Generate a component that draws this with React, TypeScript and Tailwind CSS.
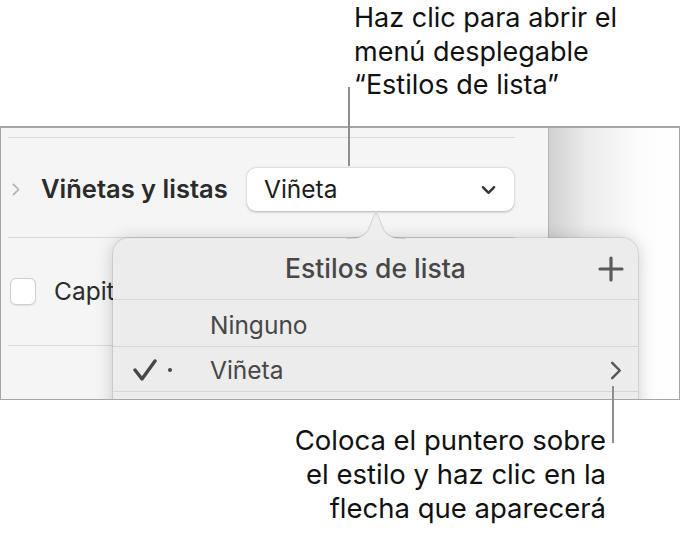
import React from "react";

function ChevronRight({ className }: { className?: string }) {
  return (
    <svg viewBox="0 0 12 20" className={className} fill="none">
      <polyline points="2,2 10,10 2,18" stroke="currentColor" strokeWidth="2.6" strokeLinecap="round" strokeLinejoin="round" />
    </svg>
  );
}

export default function App() {
  return (
    <div className="relative w-[681px] h-[535px] overflow-hidden bg-white font-['Inter',sans-serif] text-[#111]">
      {/* callout top */}
      <div className="h-[126px] pl-[354px] pt-[1px] text-[27px] leading-[33.5px]">
        <p>Haz clic para abrir el</p>
        <p>menú desplegable</p>
        <p>“Estilos de lista”</p>
      </div>

      {/* captured window */}
      <div className="relative flex h-[274px] w-[680px] overflow-hidden border border-t-2 border-[#a5a5a5]">
        <div className="w-[548px] shrink-0 border-r border-[#b5b5b5] bg-[#f5f5f5]">
          <div className="mt-[9px] ml-[7px] h-px w-[507px] bg-[#d9d9d9]" />

          <div className="mt-[30px] flex items-center pl-[11px]">
            <ChevronRight className="h-[13px] w-[8px] text-[#b3b3b3]" />
            <span className="ml-[21px] w-[206px] text-[25.5px] font-semibold text-[#2b2b2b]">Viñetas y listas</span>
            <div className="flex h-[43px] w-[267px] items-center justify-between rounded-[9px] bg-white pl-[17px] pr-[18px] shadow-[0_0.5px_2.5px_rgba(0,0,0,0.28)]">
              <span className="text-[24.5px] text-[#1c1c1c]">Viñeta</span>
              <svg viewBox="0 0 16 10" className="h-[10px] w-[15px]" fill="none">
                <polyline points="2,2 8,8 14,2" stroke="#333" strokeWidth="2.6" strokeLinecap="round" strokeLinejoin="round" />
              </svg>
            </div>
          </div>

          <div className="mt-[26px] ml-[7px] h-px w-[507px] bg-[#d9d9d9]" />

          <div className="mt-[40px] flex h-[27px] items-center pl-[9px]">
            <div className="h-[27px] w-[26px] rounded-[6px] border border-[#cfcfcf] bg-white shadow-[0_0.5px_1px_rgba(0,0,0,0.08)]" />
            <span className="ml-[18px] text-[24.5px] leading-none text-[#2b2b2b]">Capitalización</span>
          </div>

          <div className="mt-[40px] ml-[7px] h-px w-[507px] bg-[#d9d9d9]" />
        </div>

        <div className="flex-1 bg-[linear-gradient(to_right,#d0d0d0,#ececec_30%,#fcfcfc_70%,#fff)]" />

        {/* list styles popover */}
        <div className="absolute left-[112px] top-[110px] w-[525px] h-[200px] rounded-t-[16px] bg-[#ececec] shadow-[0_2px_18px_rgba(0,0,0,0.2),0_0_0_1px_rgba(0,0,0,0.08)]">
          <svg viewBox="0 0 60 27" className="absolute left-[233px] top-[-26px] h-[27px] w-[60px]">
            <path d="M0,27 C12,27 18,25 22,19 L28,4 Q30,0 32,4 L38,19 C42,25 48,27 60,27 Z" fill="#eeeeee" />
            <path d="M0,26.5 C12,26.5 18,24.5 22,18.5 L28,3.5 Q30,-0.5 32,3.5 L38,18.5 C42,24.5 48,26.5 60,26.5" fill="none" stroke="rgba(0,0,0,0.14)" strokeWidth="1" />
          </svg>

          <div className="relative flex h-[62px] items-center justify-center border-b border-[#d6d6d6]">
            <span className="text-[26.5px] font-medium text-[#474747]">Estilos de lista</span>
            <svg viewBox="0 0 26 26" className="absolute right-[14px] top-[18px] h-[26px] w-[26px]">
              <path d="M13,2 V24 M2,13 H24" stroke="#5a5a5a" strokeWidth="3.2" strokeLinecap="round" />
            </svg>
          </div>

          <div className="flex h-[47px] items-center border-b border-[#d6d6d6] pl-[97px] pt-[4px]">
            <span className="text-[24.5px] text-[#474747]">Ninguno</span>
          </div>

          <div className="flex h-[45px] items-center border-b border-[#d6d6d6] pl-[20px] pr-[16px] pt-[2px]">
            <svg viewBox="0 0 24 22" className="h-[22px] w-[24px]" fill="none">
              <polyline points="2,11 9,20 22,2" stroke="#474747" strokeWidth="3.4" strokeLinecap="round" strokeLinejoin="round" />
            </svg>
            <span className="ml-[11px] h-[4px] w-[4px] rounded-full bg-[#474747]" />
            <span className="ml-[38px] text-[24.5px] text-[#474747]">Viñeta</span>
            <ChevronRight className="ml-auto h-[19px] w-[12px] text-[#555]" />
          </div>

          <div className="h-[45px]" />
        </div>
      </div>

      {/* callout bottom */}
      <div className="pt-[23px] pr-[75px] text-right text-[27.5px] leading-[34px]">
        <p>Coloca el puntero sobre</p>
        <p>el estilo y haz clic en la</p>
        <p>flecha que aparecerá</p>
      </div>

      {/* leader lines */}
      <div className="absolute left-[348px] top-[87px] h-[79px] w-[2px] bg-[#8e8e8e]" />
      <div className="absolute left-[612px] top-[386px] h-[57px] w-[2px] bg-[#8e8e8e]" />
    </div>
  );
}
